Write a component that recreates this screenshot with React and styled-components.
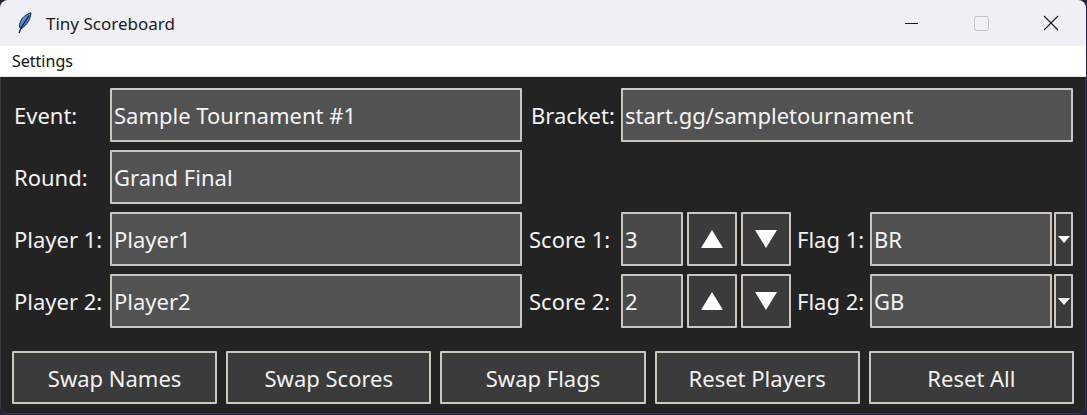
import React from 'react';
import styled, { createGlobalStyle } from 'styled-components';

const GlobalStyle = createGlobalStyle`
  html, body {
    margin: 0;
    padding: 0;
    background: #2a2040;
  }
  body {
    font-family: "Noto Sans", "Open Sans", sans-serif;
  }
`;

const Window = styled.div`
  width: 1086px;
  height: 414px;
  border-radius: 8px;
  overflow: hidden;
  background: #232323;
  display: flex;
  flex-direction: column;
  box-shadow: inset 0 0 0 1px #3a3a3a;
`;

const TitleBar = styled.div`
  height: 46px;
  background: #f1eff6;
  display: flex;
  align-items: center;
  padding-left: 16px;
  flex-shrink: 0;
`;

const AppIcon = styled.svg`
  width: 16px;
  height: 22px;
  margin-right: 14px;
`;

const Title = styled.span`
  font-family: "Noto Sans", sans-serif;
  font-size: 17px;
  color: #1b1b1b;
  flex: 1;
`;

const Controls = styled.div`
  display: flex;
  height: 100%;
`;

const CtrlBtn = styled.div`
  width: 70px;
  height: 100%;
  display: flex;
  align-items: center;
  justify-content: center;
`;

const MenuBar = styled.div`
  height: 30px;
  background: #ffffff;
  border-bottom: 1px solid #e6e6e6;
  display: flex;
  align-items: center;
  padding-left: 12px;
  flex-shrink: 0;
`;

const MenuItem = styled.span`
  font-family: "Noto Sans", sans-serif;
  font-size: 16px;
  color: #111;
`;

const Body = styled.div`
  flex: 1;
  padding: 11px 11px 0 12px;
  color: #f2f2f2;
`;

const FormGrid = styled.div`
  display: grid;
  grid-template-columns: 98px 412px 99px 452px;
  grid-auto-rows: 54px;
  row-gap: 8px;
`;

const Label = styled.div`
  box-sizing: border-box;
  display: flex;
  align-items: center;
  font-size: 22px;
  color: #f2f2f2;
  padding-left: ${p => p.$pad || 2}px;
  width: ${p => (p.$w ? `${p.$w}px` : 'auto')};
  flex-shrink: 0;
  white-space: nowrap;
`;

const Entry = styled.input`
  box-sizing: border-box;
  width: 100%;
  height: 100%;
  margin: 0;
  border: 2px solid #cbc7bf;
  border-radius: 1px;
  background: ${p => p.$bg || '#525252'};
  color: #f4f4f4;
  font-family: "Noto Sans", sans-serif;
  font-size: 22px;
  padding: 0 2px;
  outline: none;
`;

const ControlRow = styled.div`
  display: flex;
  gap: 4px;
  height: 100%;
`;

const ScoreBox = styled.div`
  width: 62px;
  flex-shrink: 0;
`;

const SpinButton = styled.div`
  box-sizing: border-box;
  width: 50px;
  height: 100%;
  border: 2px solid #cbc7bf;
  border-radius: 1px;
  background: #3b3b3b;
  display: flex;
  align-items: center;
  justify-content: center;
  flex-shrink: 0;
`;

const Combo = styled.div`
  flex: 1;
  display: flex;
  gap: 2px;
  height: 100%;
`;

const ComboArrow = styled.div`
  box-sizing: border-box;
  width: 19px;
  flex-shrink: 0;
  border: 2px solid #cbc7bf;
  border-radius: 1px;
  background: #3b3b3b;
  display: flex;
  align-items: center;
  justify-content: center;
`;

const ButtonBar = styled.div`
  display: flex;
  gap: 9px;
  margin-top: 23px;
  padding-right: 1px;
`;

const ActionButton = styled.div`
  box-sizing: border-box;
  flex: 1;
  height: 53px;
  border: 2px solid #cbc7bf;
  border-radius: 1px;
  background: #3b3b3b;
  color: #f2f2f2;
  font-size: 22px;
  display: flex;
  align-items: center;
  justify-content: center;
`;

const Triangle = ({ down, w = 22, h = 18 }) => (
  <svg width={w} height={h} viewBox="0 0 22 18" preserveAspectRatio="none">
    {down
      ? <polygon points="0,0 22,0 11,18" fill="#fff" />
      : <polygon points="11,0 22,18 0,18" fill="#fff" />}
  </svg>
);

function Feather() {
  return (
    <AppIcon viewBox="0 0 16 22">
      <defs>
        <linearGradient id="fg" x1="0" y1="0" x2="1" y2="1">
          <stop offset="0" stopColor="#7fb2f0" />
          <stop offset="1" stopColor="#1d58b8" />
        </linearGradient>
      </defs>
      <path d="M15 0.8 C8.5 2.5 3 8 3.5 15.5 L5.5 16.5 C11.5 12.5 14.5 7 15 0.8 Z" fill="url(#fg)" stroke="#1a2a4a" strokeWidth="1" />
      <path d="M13 3.5 L5 16 L3 21" fill="none" stroke="#15203a" strokeWidth="1.3" />
    </AppIcon>
  );
}

function PlayerControls({ score, flag }) {
  return (
    <ControlRow>
      <ScoreBox>
        <Entry defaultValue={score} $bg="#494949" />
      </ScoreBox>
      <SpinButton><Triangle /></SpinButton>
      <SpinButton><Triangle down /></SpinButton>
      <Label $w={71} $pad={2}>{flag.label}</Label>
      <Combo>
        <Entry defaultValue={flag.value} $bg="#505050" />
        <ComboArrow><Triangle down w={12} h={7} /></ComboArrow>
      </Combo>
    </ControlRow>
  );
}

export default function App() {
  return (
    <>
      <GlobalStyle />
      <Window>
        <TitleBar>
          <Feather />
          <Title>Tiny Scoreboard</Title>
          <Controls>
            <CtrlBtn>
              <svg width="14" height="14" viewBox="0 0 14 14"><line x1="1" y1="7.5" x2="14" y2="7.5" stroke="#1b1b1b" strokeWidth="1" /></svg>
            </CtrlBtn>
            <CtrlBtn>
              <svg width="15" height="15" viewBox="0 0 15 15"><rect x="0.5" y="0.5" width="14" height="14" rx="2" fill="none" stroke="#c4c4c4" strokeWidth="1" /></svg>
            </CtrlBtn>
            <CtrlBtn>
              <svg width="16" height="16" viewBox="0 0 16 16"><path d="M1 1 L15 15 M15 1 L1 15" stroke="#1b1b1b" strokeWidth="1.1" /></svg>
            </CtrlBtn>
          </Controls>
        </TitleBar>
        <MenuBar><MenuItem>Settings</MenuItem></MenuBar>
        <Body>
          <FormGrid>
            <Label>Event:</Label>
            <Entry defaultValue="Sample Tournament #1" />
            <Label $pad={9}>Bracket:</Label>
            <Entry defaultValue="start.gg/sampletournament" />

            <Label>Round:</Label>
            <Entry defaultValue="Grand Final" />
            <div />
            <div />

            <Label>Player 1:</Label>
            <Entry defaultValue="Player1" />
            <Label $pad={7}>Score 1:</Label>
            <PlayerControls score="3" flag={{ label: 'Flag 1:', value: 'BR' }} />

            <Label>Player 2:</Label>
            <Entry defaultValue="Player2" />
            <Label $pad={7}>Score 2:</Label>
            <PlayerControls score="2" flag={{ label: 'Flag 2:', value: 'GB' }} />
          </FormGrid>
          <ButtonBar>
            <ActionButton>Swap Names</ActionButton>
            <ActionButton>Swap Scores</ActionButton>
            <ActionButton>Swap Flags</ActionButton>
            <ActionButton>Reset Players</ActionButton>
            <ActionButton>Reset All</ActionButton>
          </ButtonBar>
        </Body>
      </Window>
    </>
  );
}
